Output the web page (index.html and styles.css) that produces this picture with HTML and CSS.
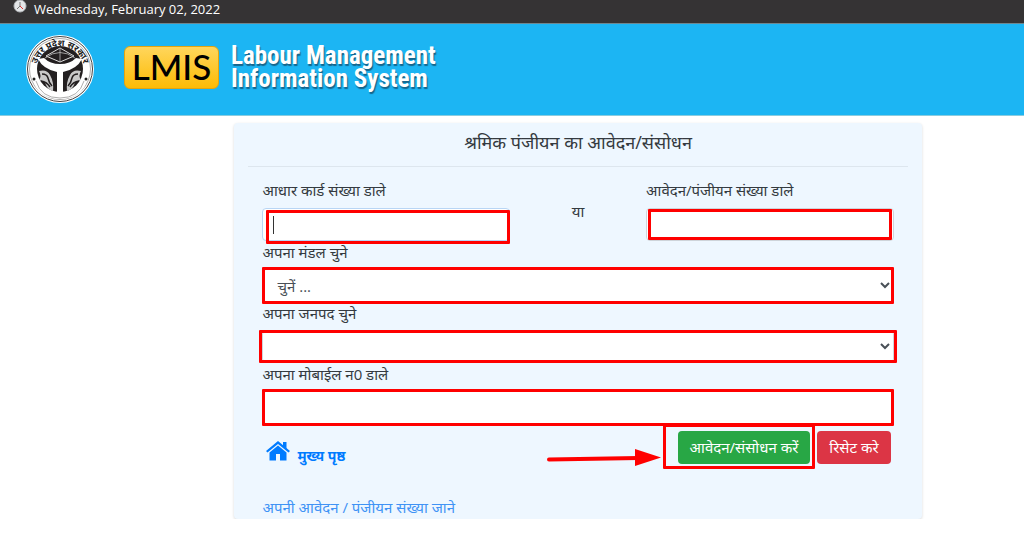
FILE: index.html
```html
<!DOCTYPE html>
<html lang="hi">
<head>
    <meta charset="UTF-8">
    <meta name="viewport" content="width=device-width, initial-scale=1.0">
    <title>Labour Management Information System</title>
    <link rel="stylesheet" href="styles.css">
</head>
<body>
    <div class="topbar">
        <svg class="clock" viewBox="0 0 14 14" aria-hidden="true">
            <circle cx="7" cy="6" r="6" fill="#e4e6e8" stroke="#b5b8bb"/>
            <path d="M7 2v4L4 9" fill="none" stroke="#777" stroke-width="1"/>
            <path d="M7 6l3 3" stroke="#d33" stroke-width="1"/>
        </svg>
        <span>Wednesday, February 02, 2022</span>
    </div>

    <header class="header">
        <svg class="emblem" viewBox="0 0 70 70" role="img" aria-label="उत्तर प्रदेश सरकार">
            <defs>
                <path id="ring" d="M12 43A24 24 0 1 1 58 43"/>
            </defs>
            <circle cx="35" cy="35" r="34" fill="#fff"/>
            <circle cx="35" cy="35" r="32.500" fill="none" stroke="#444" stroke-width="1"/>
            <circle cx="35" cy="35" r="30.500" fill="none" stroke="#777" stroke-width=".6"/>
            <circle cx="35" cy="35" r="23" fill="#231f20"/>
            <text class="emblem-text"><textPath href="#ring" startOffset="50%" text-anchor="middle">उत्तर प्रदेश सरकार</textPath></text>
            <path d="M35 14L49 22L35 28L21 22Z" fill="none" stroke="#ddd" stroke-width="1"/>
            <path d="M35 14V28M20 24Q35 13 50 24" fill="none" stroke="#bbb" stroke-width=".8"/>
            <path d="M13 25L19 24Q25 30 35 30Q45 30 51 24L57 25Q52 35 38 38V59H32V38Q18 35 13 25Z" fill="#fff"/>
            <path d="M14 37q8-2 11 4q4 7 3 16q-5-1-7-6q-1-4-7-5q3-4 0-9zM56 37q-8-2-11 4q-4 7-3 16q5-1 7-6q1-4 7-5q-3-4 0-9z" fill="#c9c9c9"/>
            <path d="M17 40q5 0 6 4q1 5 4 8M53 40q-5 0-6 4q-1 5-4 8M16 47q6 1 9 6M54 47q-6 1-9 6" fill="none" stroke="#231f20" stroke-width="1.500"/>
            <path d="M11 46q5 14 24 14q19 0 24-14l3 0q-5 19-27 19q-22 0-27-19z" fill="#fff"/>
            <path d="M11 47q5 17 24 17q19 0 24-17" fill="none" stroke="#777" stroke-width=".6"/>
            <circle cx="9" cy="45" r="1.500" fill="#222"/>
            <circle cx="61" cy="45" r="1.500" fill="#222"/>
        </svg>
        <span class="badge">LMIS</span>
        <h1 class="site-title">Labour Management<br>Information System</h1>
    </header>

    <main class="card">
        <h2 class="card-title">श्रमिक पंजीयन का आवेदन/संसोधन</h2>
        <form class="form">
            <div class="pair">
                <div class="field">
                    <label for="aadhaar">आधार कार्ड संख्या डाले</label>
                    <div class="control">
                        <input type="text" id="aadhaar" class="focused" value="">
                        <span class="caret"></span>
                        <span class="mark mark-aadhaar"></span>
                    </div>
                </div>
                <span class="or">या</span>
                <div class="field">
                    <label for="regno">आवेदन/पंजीयन संख्या डाले</label>
                    <div class="control">
                        <input type="text" id="regno">
                        <span class="mark mark-regno"></span>
                    </div>
                </div>
            </div>
            <div class="field">
                <label for="mandal">अपना मंडल चुने</label>
                <div class="control">
                    <select id="mandal"><option>चुनें ...</option></select>
                    <span class="mark mark-wide"></span>
                </div>
            </div>
            <div class="field">
                <label for="district">अपना जनपद चुने</label>
                <div class="control">
                    <select id="district"><option></option></select>
                    <span class="mark mark-outer"></span>
                </div>
            </div>
            <div class="field">
                <label for="mobile">अपना मोबाईल न0 डाले</label>
                <div class="control">
                    <input type="text" id="mobile">
                    <span class="mark mark-wide"></span>
                </div>
            </div>
            <div class="actions">
                <a class="home" href="#">
                    <svg viewBox="0 0 24 20" aria-hidden="true">
                        <path d="M12 0L24 10L22.500 11.500L12 3L1.500 11.500L0 10Z"/>
                        <path d="M17 1H20.500V8L17 5Z"/>
                        <path d="M12 4.500L20.500 11.500V19.500H14V13H10V19.500H3.500V11.500Z"/>
                    </svg>
                    <span>मुख्य पृष्ठ</span>
                </a>
                <div class="buttons">
                    <svg class="arrow" viewBox="0 0 114 18" aria-hidden="true">
                        <path d="M2 10.500L92 9" stroke="#f00" stroke-width="4" stroke-linecap="round"/>
                        <path d="M88 0L114 8.500L88 17Z" fill="#f00"/>
                    </svg>
                    <div class="submit">
                        <button type="submit" class="btn btn-success">आवेदन/संसोधन करें</button>
                        <span class="mark mark-submit"></span>
                    </div>
                    <button type="reset" class="btn btn-danger">रिसेट करे</button>
                </div>
            </div>
            <a class="know" href="#">अपनी आवेदन / पंजीयन संख्या जाने</a>
        </form>
    </main>
</body>
</html>
```
FILE: styles.css
```css
* {
    box-sizing: border-box;
}
body {
    margin: 0;
    background: #fff;
    color: #343a40;
    font-family: "Open Sans", "Noto Sans", "Noto Sans Devanagari", sans-serif;
    font-size: 15px;
    line-height: 23px;
}
.topbar {
    display: flex;
    gap: 7px;
    height: 24px;
    padding-left: 13px;
    background: #353334;
    border-bottom: 1px solid #6d8790;
    color: #fff;
    font-size: 13px;
    line-height: 18px;
}
.clock {
    width: 14px;
    height: 14px;
}
.header {
    display: flex;
    align-items: center;
    height: 92px;
    padding: 0 25px 2px;
    background: #1cb5f3;
    border-bottom: 1px solid #8accdf;
}
.emblem {
    width: 70px;
    height: 70px;
}
.emblem-text {
    font-size: 9px;
    font-weight: bold;
    fill: #222;
}
.badge {
    width: 95px;
    height: 43px;
    margin: 0 12px 2px 29px;
    border: 1px solid #e3a410;
    border-radius: 6px;
    background: linear-gradient(#ffd65c, #fdbb05);
    color: #000;
    font-family: Lato, sans-serif;
    font-size: 35px;
    font-weight: 500;
    line-height: 39px;
    text-align: center;
}
.site-title {
    margin: 0;
    padding-bottom: 4px;
    color: #fff;
    font-family: "Roboto Condensed", Roboto, sans-serif;
    font-size: 25px;
    line-height: 23px;
    text-shadow: 1px 2px 1px #16658c;
}
.card {
    margin: 7px 10% 0 22.9%;
    padding: 0 14px;
    border-radius: 4px;
    background: #eef7ff;
    box-shadow: 0 1px 3px rgba(0,0,0,0.15);
}
.card-title {
    margin: 0;
    padding: 5px 0 9px;
    border-bottom: 1px solid #dde6ee;
    font-size: 18px;
    font-weight: normal;
    line-height: 29px;
    text-align: center;
}
.form {
    padding: 12px 14px 0;
}
.pair {
    display: grid;
    grid-template-columns: 1fr 136px 1fr;
}
.field label {
    display: block;
    margin-bottom: 5px;
}
.pair .field label {
    margin-bottom: 6px;
}
.or {
    padding-top: 21px;
    text-align: center;
}
.control {
    position: relative;
}
.control input,
.control select {
    display: block;
    width: 100%;
    height: 33px;
    padding: 4px 11px;
    border: 1px solid #ced4da;
    border-radius: 4px;
    background: #fff;
    color: #495057;
    font: inherit;
}
.control select {
    padding: 4px 0 4px 10px;
}
.control .focused {
    border-color: #b9d6f5;
}
.caret {
    position: absolute;
    top: 8px;
    left: 11px;
    height: 18px;
    border-left: 1px solid #333;
}
/* red highlight boxes */
.mark {
    position: absolute;
    border: 3px solid #f00;
    border-radius: 1px;
    pointer-events: none;
}
.mark-aadhaar {
    inset: 2px 0 -3px 4px;
}
.mark-regno {
    inset: 1px 2px;
}
.mark-wide {
    inset: -2px 0;
}
.mark-outer {
    inset: 0 -3px;
}
.mark-submit {
    inset: -7px -5px -5px -15px;
}
.actions {
    display: flex;
    justify-content: space-between;
    padding: 7px 3px 0 4px;
}
.home {
    display: flex;
    gap: 7px;
    padding-top: 10px;
    color: #007bff;
    font-size: 14px;
    font-weight: bold;
    line-height: 30px;
    text-decoration: none;
}
.home svg {
    width: 24px;
    height: 20px;
    fill: #007bff;
}
.buttons {
    display: flex;
    align-items: flex-start;
    gap: 7px;
}
.arrow {
    width: 114px;
    height: 18px;
    margin: 18px 10px 0 0;
}
.submit {
    position: relative;
}
.btn {
    display: block;
    height: 33px;
    padding: 0 12px;
    border: 0;
    border-radius: 4px;
    color: #fff;
    font: inherit;
    cursor: pointer;
}
.btn-success {
    background: #28a745;
}
.btn-danger {
    background: #dc3545;
}
.know {
    display: block;
    margin-top: 25px;
    color: #3f93f5;
    text-decoration: none;
}
```
